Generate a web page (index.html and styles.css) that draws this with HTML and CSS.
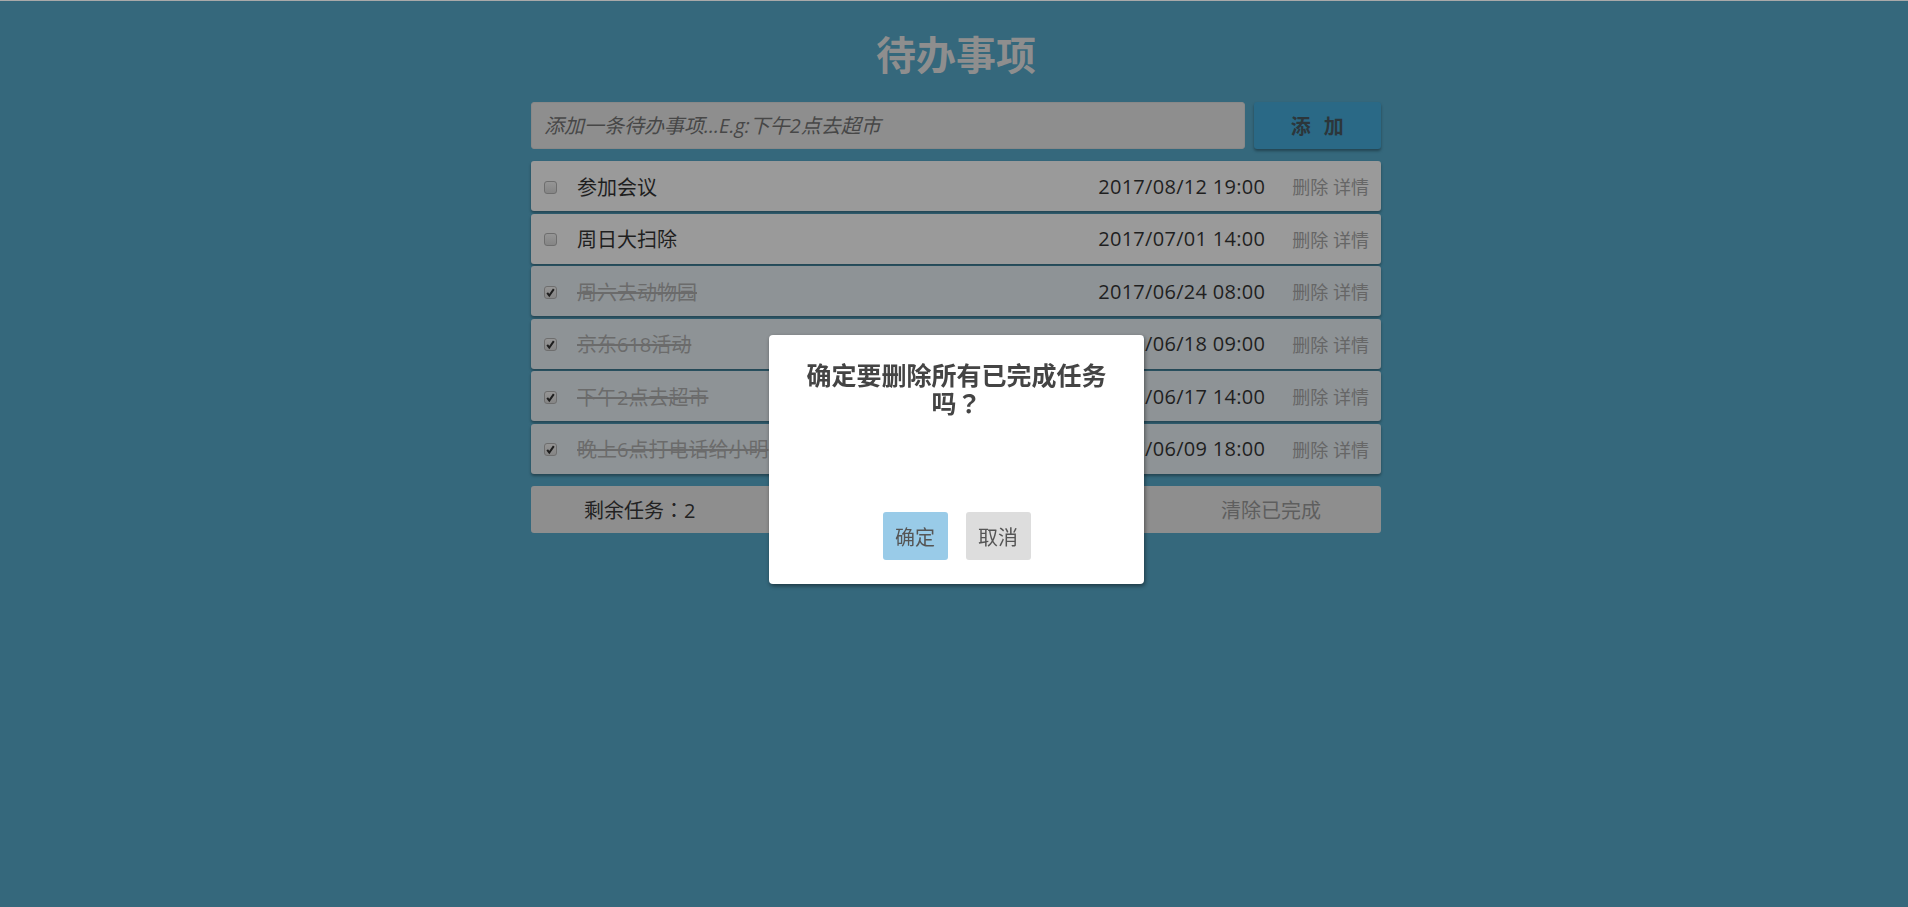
FILE: index.html
```html
<!DOCTYPE html>
<html lang="zh-CN">
<head>
<meta charset="utf-8">
<title>待办事项</title>
<link rel="stylesheet" href="styles.css">
</head>
<body>
<div class="page">
  <div class="app">
    <h1 class="title">待办事项</h1>
    <form class="add-form">
      <input class="add-input" type="text" placeholder="添加一条待办事项...E.g:下午2点去超市">
      <button class="add-btn" type="button">添 加</button>
    </form>
    <ul class="list">
      <li class="item">
        <span class="box"></span>
        <span class="text">参加会议</span>
        <span class="time">2017/08/12 19:00</span>
        <span class="ops">删除 详情</span>
      </li>
      <li class="item">
        <span class="box"></span>
        <span class="text">周日大扫除</span>
        <span class="time">2017/07/01 14:00</span>
        <span class="ops">删除 详情</span>
      </li>
      <li class="item done">
        <span class="box"><svg viewBox="0 0 13 13" width="13" height="13"><path d="M3.2 6.8 L5.3 9.6 L9.8 3.2" fill="none" stroke="#1e1e1e" stroke-width="2"/></svg></span>
        <span class="text">周六去动物园</span>
        <span class="time">2017/06/24 08:00</span>
        <span class="ops">删除 详情</span>
      </li>
      <li class="item done">
        <span class="box"><svg viewBox="0 0 13 13" width="13" height="13"><path d="M3.2 6.8 L5.3 9.6 L9.8 3.2" fill="none" stroke="#1e1e1e" stroke-width="2"/></svg></span>
        <span class="text">京东618活动</span>
        <span class="time">2017/06/18 09:00</span>
        <span class="ops">删除 详情</span>
      </li>
      <li class="item done">
        <span class="box"><svg viewBox="0 0 13 13" width="13" height="13"><path d="M3.2 6.8 L5.3 9.6 L9.8 3.2" fill="none" stroke="#1e1e1e" stroke-width="2"/></svg></span>
        <span class="text">下午2点去超市</span>
        <span class="time">2017/06/17 14:00</span>
        <span class="ops">删除 详情</span>
      </li>
      <li class="item done">
        <span class="box"><svg viewBox="0 0 13 13" width="13" height="13"><path d="M3.2 6.8 L5.3 9.6 L9.8 3.2" fill="none" stroke="#1e1e1e" stroke-width="2"/></svg></span>
        <span class="text">晚上6点打电话给小明</span>
        <span class="time">2017/06/09 18:00</span>
        <span class="ops">删除 详情</span>
      </li>
    </ul>
    <div class="footer">
      <span class="left-count">剩余任务<span class="punct">：</span>2</span>
      <span class="clear">清除已完成</span>
    </div>
  </div>
  <div class="modal">
    <h2 class="modal-title">确定要删除所有已完成任务吗<span class="punct">？</span></h2>
    <div class="modal-btns">
      <button class="mbtn ok" type="button">确定</button>
      <button class="mbtn cancel" type="button">取消</button>
    </div>
  </div>
</div>
</body>
</html>
```

FILE: styles.css
```css
html, body {
  margin: 0;
  padding: 0;
}
body {
  background: #35687c;
  border-top: 1px solid #a9a9a9;
  font-family: "Open Sans", "Noto Sans CJK SC", sans-serif;
  height: 906px;
  overflow: hidden;
}
.page {
  padding-left: 4px;
}
.app {
  width: 850px;
  margin: 0 auto;
  padding-top: 28px;
}
.title {
  margin: 0 0 25px;
  font-size: 40px;
  line-height: 48px;
  font-weight: bold;
  color: #8e8e8e;
  text-align: center;
  font-family: "Noto Sans CJK SC", sans-serif;
}
.add-form {
  display: flex;
  justify-content: space-between;
  height: 47px;
  margin: 0;
}
.add-input {
  width: 84%;
  box-sizing: border-box;
  border: 1px solid #888888;
  border-radius: 3px;
  background: #8e8e8e;
  padding: 0 12px;
  font-family: "Open Sans", "Noto Sans CJK SC", sans-serif;
  font-size: 20px;
  outline: none;
}
.add-input::placeholder {
  color: #474747;
  font-style: italic;
}
.add-btn {
  width: 15%;
  box-sizing: border-box;
  border: none;
  border-radius: 3px;
  background: #2a6986;
  color: #2c363b;
  font-family: "Open Sans", "Noto Sans CJK SC", sans-serif;
  font-weight: bold;
  font-size: 20px;
  word-spacing: 8px;
  box-shadow: 0 2px 3px rgba(0, 0, 0, 0.35);
}
.list {
  list-style: none;
  margin: 12px 0 0;
  padding: 0;
  display: flex;
  flex-direction: column;
  gap: 2.5px;
}
.item {
  height: 50px;
  display: flex;
  align-items: center;
  background: #9a9a9a;
  border-radius: 3px;
  box-shadow: 0 2px 3px rgba(0, 0, 0, 0.35);
  padding: 0 12px 0 13px;
  font-size: 20px;
  color: #1f1f1f;
}
.item.done {
  background: #8e9396;
}
.box {
  width: 13px;
  height: 13px;
  box-sizing: border-box;
  border: 1px solid #6e6e6e;
  border-radius: 3px;
  background: linear-gradient(#959595, #858585);
  display: flex;
  align-items: center;
  justify-content: center;
  flex: none;
  margin-top: 2px;
}
.box svg {
  display: block;
  flex: none;
}
.text {
  flex: 1;
  margin-left: 20px;
  white-space: nowrap;
}
.done .text {
  color: #6b6b6b;
  text-decoration: line-through;
}
.time {
  color: #1f1f1f;
  letter-spacing: 0.3px;
}
.ops {
  margin-left: 27px;
  font-size: 18px;
  color: #666666;
}
.footer {
  margin-top: 12.5px;
  height: 47px;
  display: flex;
  align-items: center;
  justify-content: space-between;
  background: #8e8e8e;
  border-radius: 3px;
  padding: 0 60px 0 53px;
  font-size: 20px;
}
.left-count {
  color: #222222;
}
.punct {
  display: inline-block;
  width: 1em;
  text-align: center;
  font-family: "Noto Sans CJK TC", "Noto Sans CJK JP", sans-serif;
}
.clear {
  color: #5e5e5e;
}
.modal {
  position: fixed;
  left: calc(50% - 185px);
  top: 335px;
  width: 375px;
  height: 249px;
  box-sizing: border-box;
  background: #ffffff;
  border-radius: 4px;
  box-shadow: 1px 2px 4px rgba(0, 0, 0, 0.45);
  padding: 25px 26px 24px;
  display: flex;
  flex-direction: column;
  justify-content: space-between;
}
.modal-title {
  margin: 0;
  font-size: 25px;
  line-height: 28px;
  font-weight: bold;
  color: #444444;
  text-align: center;
  font-family: "Noto Sans CJK SC", sans-serif;
}
.modal-btns {
  display: flex;
  justify-content: center;
  gap: 18px;
}
.mbtn {
  width: 65px;
  height: 48px;
  border: none;
  border-radius: 3px;
  font-family: "Open Sans", "Noto Sans CJK SC", sans-serif;
  font-size: 20px;
  color: #555555;
  padding: 0;
}
.mbtn.ok {
  background: #99cbe8;
}
.mbtn.cancel {
  background: #dddddd;
}
```
